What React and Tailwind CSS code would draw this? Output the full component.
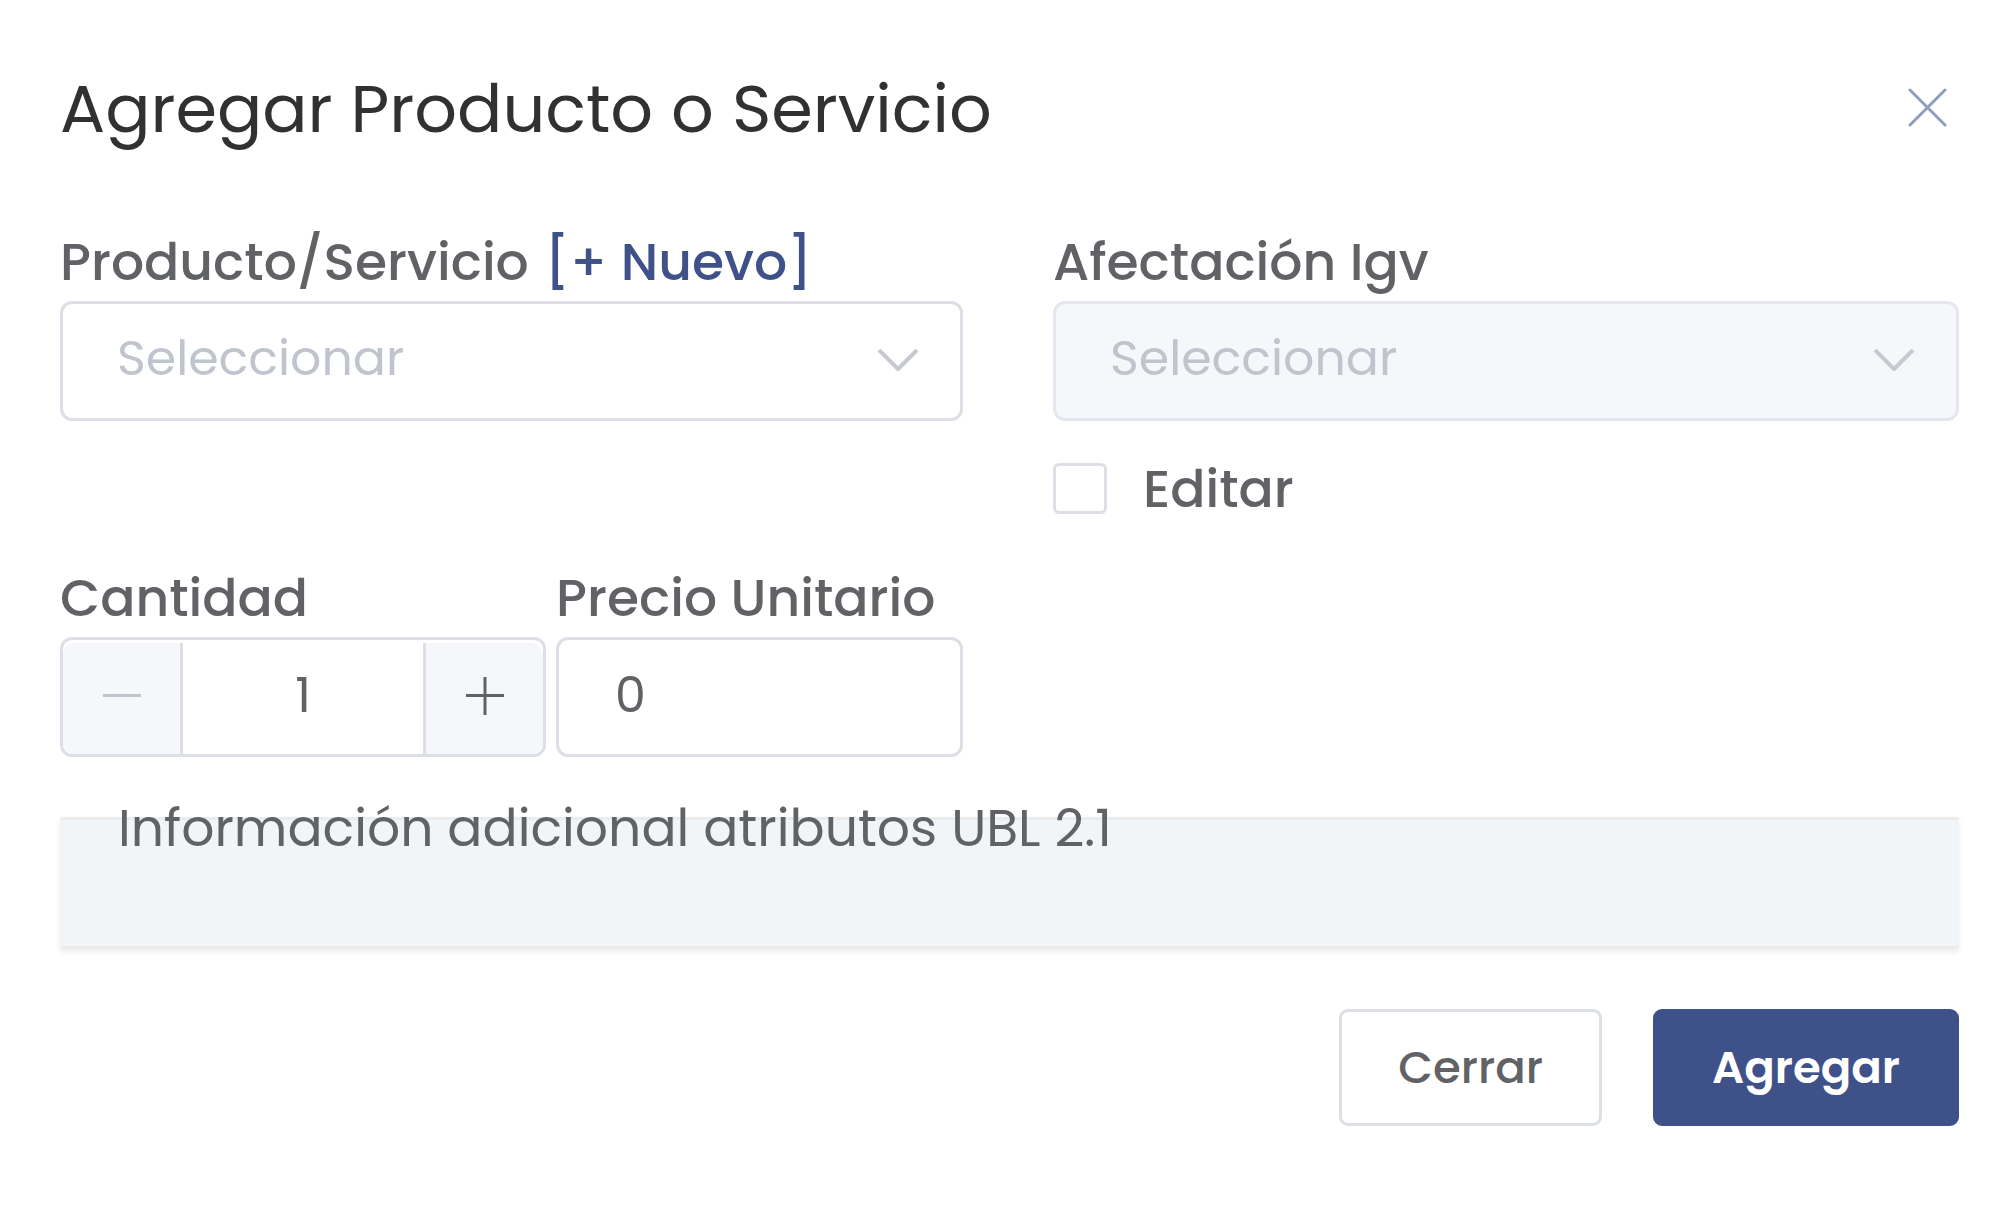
import { useState } from "react";

const label = "flex h-[78px] items-center whitespace-nowrap text-[52px] font-medium text-[#606266]";
const field = "h-[120px] w-full rounded-xl border-[3px]";
const columns = "grid grid-cols-[903fr_906fr] gap-x-[90px]";

function SelectField({ id, disabled }) {
  return (
    <div className="relative">
      <select
        id={id}
        disabled={disabled}
        defaultValue=""
        className={`${field} appearance-none pr-24 pb-1 pl-[54px] text-[49px] text-[#c0c4cc] opacity-100 ${
          disabled ? "border-[#e4e7ed] bg-[#f5f7fa]" : "border-[#dcdfe6] bg-white"
        }`}
      >
        <option value="">Seleccionar</option>
      </select>
      <svg
        viewBox="0 0 42 24"
        className="pointer-events-none absolute top-12 right-11 h-6 w-[42px]"
        fill="none"
        stroke="#c6c9d0"
        strokeWidth="4"
        strokeLinejoin="round"
      >
        <path d="M2 1 21 20 40 1" />
      </svg>
    </div>
  );
}

function QuantityField() {
  const [quantity, setQuantity] = useState(1);
  return (
    <div className={`${field} flex overflow-hidden border-[#dcdfe6] bg-white pt-[3px]`}>
      <button
        type="button"
        aria-label="Disminuir"
        disabled={quantity <= 1}
        onClick={() => setQuantity(quantity - 1)}
        className="flex w-[120px] shrink-0 items-center justify-center rounded-tl-xl border-r-[3px] border-[#dcdfe6] bg-[#f5f7fa] pb-1"
      >
        <svg viewBox="0 0 40 40" className="size-10" stroke="#c0c4cc" strokeWidth="3">
          <path d="M1 18.5H39" />
        </svg>
      </button>
      <input
        id="cantidad"
        type="text"
        value={quantity}
        onChange={(e) => setQuantity(Number(e.target.value) || 0)}
        className="w-full min-w-0 pb-1.5 text-center text-[49px] text-[#606266] outline-none"
      />
      <button
        type="button"
        aria-label="Aumentar"
        onClick={() => setQuantity(quantity + 1)}
        className="flex w-[120px] shrink-0 items-center justify-center rounded-tr-xl border-l-[3px] border-[#dcdfe6] bg-[#f5f7fa] pb-1"
      >
        <svg viewBox="0 0 40 40" className="size-10" stroke="#606266" strokeWidth="3">
          <path d="M1 18.5H39M20 0V38" />
        </svg>
      </button>
    </div>
  );
}

export default function App() {
  return (
    <div
      role="dialog"
      aria-labelledby="titulo"
      className="min-h-screen bg-white pt-[61px] pr-[57px] pb-24 pl-[60px] font-[Poppins,Inter,sans-serif]"
    >
      <header className="flex h-24 items-center justify-between">
        <h1 id="titulo" className="whitespace-nowrap text-[67px] text-[#303133]">
          Agregar Producto o Servicio
        </h1>
        <button type="button" aria-label="Cerrar" className="mr-3 mb-1">
          <svg viewBox="0 0 39 39" className="size-[39px]" stroke="#8f9dbe" strokeWidth="3" strokeLinecap="round">
            <path d="M2 2 37 37M37 2 2 37" />
          </svg>
        </button>
      </header>

      <form onSubmit={(e) => e.preventDefault()}>
        <div className={`mt-[66px] ${columns}`}>
          <div>
            <div className={label}>
              <label htmlFor="producto">Producto/Servicio</label>
              <a href="#nuevo" className="ml-4 text-[#3f5189]">
                [+ Nuevo]
              </a>
            </div>
            <SelectField id="producto" />
          </div>
          <div>
            <label htmlFor="afectacion" className={label}>
              Afectación Igv
            </label>
            <SelectField id="afectacion" disabled />
            <label className="mt-10 flex h-14 items-center text-[52px] font-medium text-[#606266]">
              <input
                type="checkbox"
                className="mr-9 mb-0.5 h-[51px] w-[54px] appearance-none rounded-md border-[3px] border-[#dcdfe6] bg-white checked:bg-[#3f5189]"
              />
              Editar
            </label>
          </div>
        </div>

        <div className={`mt-[42px] ${columns}`}>
          <div className="grid grid-cols-[486fr_407fr] gap-2.5">
            <div>
              <label htmlFor="cantidad" className={label}>
                Cantidad
              </label>
              <QuantityField />
            </div>
            <div>
              <label htmlFor="precio" className={label}>
                Precio Unitario
              </label>
              <input
                id="precio"
                type="text"
                defaultValue="0"
                className={`${field} border-[#dcdfe6] bg-white px-14 pb-1 text-[49px] text-[#606266]`}
              />
            </div>
          </div>
        </div>

        <section className="mt-[60px] h-[132px] rounded-xs border-y-[3px] border-[#ebebeb] bg-[#f1f5f8] px-[58px] shadow-[0_3px_6px_rgba(0,0,0,0.08)]">
          <h2 className="-mt-7 text-[52px]/[72px] whitespace-nowrap text-[#606266]">
            Información adicional atributos UBL 2.1
          </h2>
        </section>

        <footer className="mt-[60px] flex justify-end gap-[51px] text-[45px] font-medium">
          <button
            type="button"
            className="h-[117px] rounded-[9px] border-[3px] border-[#dcdfe6] bg-white px-14 text-[#606266]"
          >
            Cerrar
          </button>
          <button
            type="submit"
            className="h-[117px] rounded-[9px] border-[3px] border-[#3f5189] bg-[#3f5189] px-14 font-semibold text-white"
          >
            Agregar
          </button>
        </footer>
      </form>
    </div>
  );
}
